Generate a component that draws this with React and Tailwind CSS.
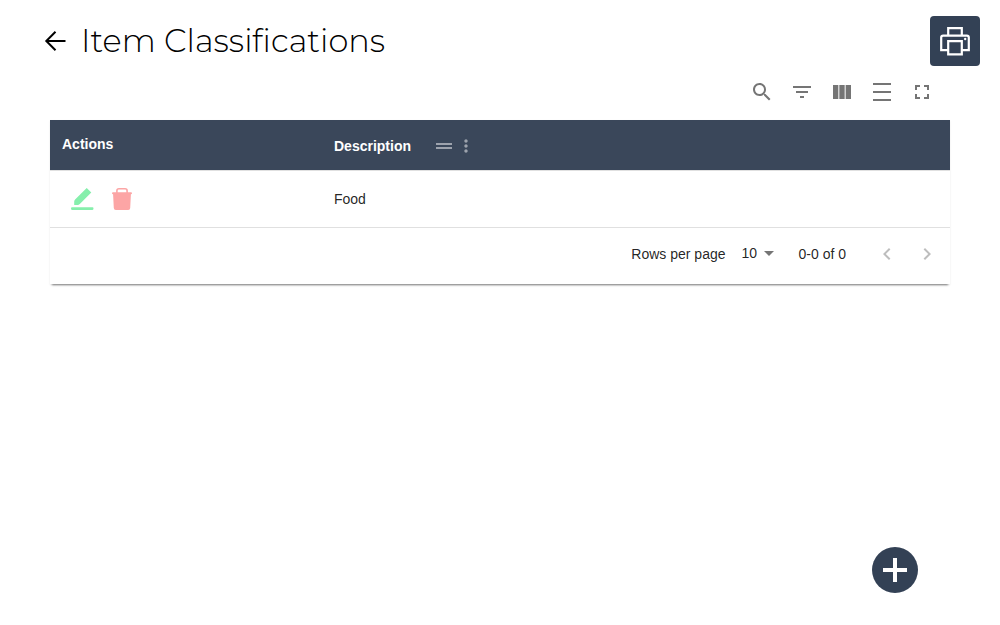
function Icon({ d, className }) {
  return (
    <svg viewBox="0 0 24 24" fill="currentColor" aria-hidden="true" className={className}>
      <path d={d} />
    </svg>
  );
}

function PrinterIcon() {
  return (
    <svg viewBox="0 0 32 32" fill="none" stroke="currentColor" strokeWidth="2.2" aria-hidden="true" className="size-8">
      <path d="M9.200 10.500V3.200h13.600v7.300" />
      <path d="M9.200 25.200H2.200V12.600q0-2 2-2h23.600q2 0 2 2v12.600h-7" />
      <path d="M9.200 16.200h13.600v13.200H9.200z" />
      <circle cx="26.200" cy="14" r="1.200" fill="currentColor" stroke="none" />
    </svg>
  );
}

const tools = [
  { label: "Show search", d: "M15.5 14h-.79l-.28-.27C15.41 12.59 16 11.11 16 9.5 16 5.91 13.09 3 9.5 3S3 5.91 3 9.5 5.91 16 9.5 16c1.61 0 3.09-.59 4.23-1.57l.27.28v.79l5 4.99L20.49 19l-4.99-5zm-6 0C7.01 14 5 11.99 5 9.5S7.01 5 9.5 5 14 7.01 14 9.5 11.99 14 9.5 14z" },
  { label: "Show filters", d: "M10 18h4v-2h-4v2zM3 6v2h18V6H3zm3 7h12v-2H6v2z" },
  { label: "Show columns", d: "M14.67 5v14H9.33V5h5.34zm1 14H21V5h-5.33v14zm-7.34 0V5H3v14h5.33z" },
  { label: "Toggle density", d: "M3 3h18v2H3zm0 16h18v2H3zm0-8h18v2H3z" },
  { label: "Toggle full screen", d: "M7 14H5v5h5v-2H7v-3zm-2-4h2V7h3V5H5v5zm12 7h-3v2h5v-5h-2v3zM14 5v2h3v3h2V5h-5z" },
];

const rows = [{ id: 1, description: "Food" }];

export default function App() {
  return (
    <div className="min-h-screen bg-white font-['Liberation_Sans',Arial,sans-serif] text-sm text-black/87">
      <header className="flex items-center justify-between pt-4 pr-5 pl-11">
        <div className="flex items-center gap-[13px]">
          <button type="button" aria-label="Back" className="text-black">
            <svg viewBox="0 0 24 24" fill="none" stroke="currentColor" strokeWidth="2" aria-hidden="true" className="size-6">
              <path d="M11.500 2.800 2.300 12l9.200 9.200M2.300 12H21.500" />
            </svg>
          </button>
          <h1 className="font-[Montserrat,Inter,sans-serif] text-[32px] leading-10 font-light text-black">
            Item Classifications
          </h1>
        </div>
        <button type="button" aria-label="Print" className="flex size-[50px] items-center justify-center rounded-sm bg-[#334155] text-white">
          <PrinterIcon />
        </button>
      </header>

      <main className="px-[50px]">
        <div className="flex h-[54px] items-center justify-end gap-4 pr-4 pb-[2px] text-[#757575]">
          {tools.map((tool) => (
            <button key={tool.label} type="button" aria-label={tool.label}>
              <Icon d={tool.d} className="size-6" />
            </button>
          ))}
        </div>

        <section className="shadow-[0_3px_2px_-2px_rgba(0,0,0,0.5),0_1px_2px_0_rgba(0,0,0,0.08)]">
          <table className="w-full table-fixed border-collapse text-left">
            <thead className="bg-[#3a475a] text-white">
              <tr className="h-[50px] border-b border-[#e0e0e0]">
                <th scope="col" className="w-[272px] px-3 pb-[2px] font-bold">Actions</th>
                <th scope="col" className="px-3 pt-[2px] font-bold">
                  <div className="flex items-center">
                    Description
                    <button type="button" aria-label="Move" className="ml-[21px] text-white/50">
                      <Icon d="M20 9H4v2h16V9zM4 15h16v-2H4v2z" className="size-6" />
                    </button>
                    <button type="button" aria-label="Column actions" className="text-white/50">
                      <Icon d="M12 8c1.100 0 2-.9 2-2s-.9-2-2-2-2 .9-2 2 .9 2 2 2zm0 2c-1.100 0-2 .9-2 2s.9 2 2 2 2-.9 2-2-.9-2-2-2zm0 6c-1.100 0-2 .9-2 2s.9 2 2 2 2-.9 2-2-.9-2-2-2z" className="size-5" />
                    </button>
                  </div>
                </th>
              </tr>
            </thead>
            <tbody>
              {rows.map((row) => (
                <tr key={row.id} className="h-[57px] border-b border-[#e0e0e0]">
                  <td className="px-5">
                    <div className="flex items-center gap-4">
                      <button type="button" aria-label="Edit" className="text-[#86efac]">
                        <Icon d="M16.700 1 21.300 5.600 9.800 17.100Q8.900 18 7.600 18H4.200v-3.400q0-1.300.9-2.200ZM2 20.300h20.500q1 0 1 1.300t-1 1.300H2q-1 0-1-1.300t1-1.300Z" className="size-6" />
                      </button>
                      <button type="button" aria-label="Delete" className="text-[#fca5a5]">
                        <svg viewBox="0 0 24 24" aria-hidden="true" className="size-6">
                          <path fill="none" stroke="currentColor" strokeWidth="1.600" d="M6.900 6V3.800q0-2 2-2h6.200q2 0 2 2V6" />
                          <path fill="currentColor" d="M3 5.200h18q1 0 1 1t-1 1h-.1L20.200 21q-.1 1.900-2 1.900H5.800q-1.900 0-2-1.900L3.100 7.200H3q-1 0-1-1t1-1Z" />
                        </svg>
                      </button>
                    </div>
                  </td>
                  <td className="px-3">{row.description}</td>
                </tr>
              ))}
            </tbody>
          </table>

          <footer className="flex h-14 items-center justify-end pr-[11px] pb-[3px]">
            <label htmlFor="page-size">Rows per page</label>
            <div className="relative ml-4 flex items-center pb-[2px]">
              <select id="page-size" defaultValue="10" className="w-8 appearance-none bg-transparent">
                <option>10</option>
                <option>20</option>
                <option>50</option>
              </select>
              <Icon d="m7 10 5 5 5-5z" className="pointer-events-none absolute -right-[7px] size-6 text-[#757575]" />
            </div>
            <span className="ml-[25px]">0-0 of 0</span>
            <button type="button" aria-label="Previous page" disabled className="ml-[29px] text-black/26">
              <Icon d="M15.410 7.410 14 6l-6 6 6 6 1.410-1.410L10.830 12z" className="size-6" />
            </button>
            <button type="button" aria-label="Next page" disabled className="ml-4 text-black/26">
              <Icon d="M10 6 8.590 7.410 13.170 12l-4.580 4.590L10 18l6-6z" className="size-6" />
            </button>
          </footer>
        </section>
      </main>

      <button type="button" aria-label="Add classification" className="fixed right-[82px] bottom-8 flex size-[46px] items-center justify-center rounded-full bg-[#334155] text-white">
        <Icon d="M10 0h4v10h10v4H14v10h-4V14H0v-4h10z" className="size-6" />
      </button>
    </div>
  );
}
